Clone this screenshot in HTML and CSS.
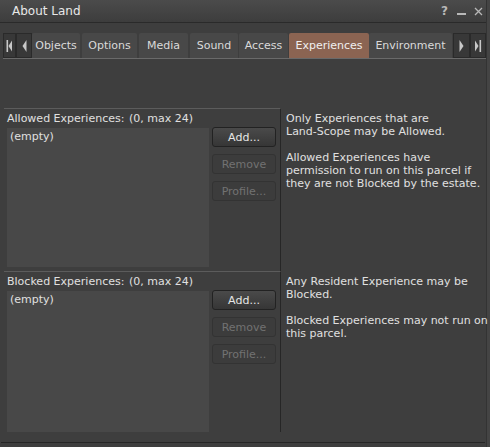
FILE: index.html
```html
<!DOCTYPE html>
<html>
<head>
<meta charset="utf-8">
<link rel="stylesheet" href="styles.css">
</head>
<body>
<div class="window">
  <div class="titlebar">
    <span class="title">About Land</span>
    <div class="controls">
      <span class="ctl">?</span>
      <span class="ctl ctl-min"></span>
      <span class="ctl ctl-x">
        <svg width="9" height="9" viewBox="0 0 9 9"><path d="M1 1L8 8M8 1L1 8" stroke="#b8b8b8" stroke-width="1.3"/></svg>
      </span>
    </div>
  </div>
  <div class="tabbar">
    <div class="navbtn nav-first">
      <svg width="10" height="14" viewBox="0 0 10 14"><rect x="1.5" y="1" width="1.6" height="12" fill="#c8c8c8"/><path d="M7 1.5L3.5 7L7 12.5Z" fill="#c8c8c8"/></svg>
    </div>
    <div class="navbtn nav-prev">
      <svg width="13" height="14" viewBox="0 0 13 14"><path d="M8.5 1L4.5 7L8.5 13Z" fill="#c8c8c8"/></svg>
    </div>
    <div class="tab t-objects">Objects</div>
    <div class="tab t-options">Options</div>
    <div class="tab t-media">Media</div>
    <div class="tab t-sound">Sound</div>
    <div class="tab t-access">Access</div>
    <div class="tab t-exp active">Experiences</div>
    <div class="tab t-env">Environment</div>
    <div class="navbtn nav-next">
      <svg width="14" height="14" viewBox="0 0 14 14"><path d="M4.5 1L8.5 7L4.5 13Z" fill="#c8c8c8"/></svg>
    </div>
    <div class="navbtn nav-last">
      <svg width="14" height="14" viewBox="0 0 14 14"><path d="M4 1.5L7.5 7L4 12.5Z" fill="#c8c8c8"/><rect x="8.5" y="1" width="1.6" height="12" fill="#c8c8c8"/></svg>
    </div>
  </div>

  <div class="content">
    <div class="row row-allowed">
      <div class="left">
        <div class="label"><span class="lname">Allowed Experiences:</span><span>(0, max 24)</span></div>
        <div class="body">
          <div class="list list-allowed"><div class="item">(empty)</div></div>
          <div class="buttons">
            <div class="btn">Add...</div>
            <div class="btn disabled">Remove</div>
            <div class="btn disabled">Profile...</div>
          </div>
        </div>
      </div>
      <div class="info">
        <p>Only Experiences that are<br>Land-Scope may be Allowed.</p>
        <p>Allowed Experiences have<br>permission to run on this parcel if<br>they are not Blocked by the estate.</p>
      </div>
    </div>
    <div class="row row-blocked">
      <div class="left">
        <div class="label"><span class="lname">Blocked Experiences:</span><span>(0, max 24)</span></div>
        <div class="body">
          <div class="list list-blocked"><div class="item">(empty)</div></div>
          <div class="buttons">
            <div class="btn">Add...</div>
            <div class="btn disabled">Remove</div>
            <div class="btn disabled">Profile...</div>
          </div>
        </div>
      </div>
      <div class="info">
        <p>Any Resident Experience may be<br>Blocked.</p>
        <p>Blocked Experiences may not run on<br>this parcel.</p>
      </div>
    </div>
  </div>
  <div class="bottomline"></div>
</div>
</body>
</html>
```

FILE: styles.css
```css
* { box-sizing: border-box; }
html, body { margin: 0; padding: 0; }
body {
  background: #444444;
  font-family: "DejaVu Sans", sans-serif;
  color: #e0e0e0;
  width: 490px;
  height: 447px;
  overflow: hidden;
}
.window {
  width: 487px;
  height: 447px;
  background: #3e3e3e;
  border-right: 1px solid #333333;
}
.titlebar {
  height: 23px;
  display: flex;
  align-items: center;
  padding-left: 12px;
  padding-right: 3px;
  background: linear-gradient(#4b4b4b, #3d3d3d);
  border-bottom: 1px solid #2a2a2a;
}
.title {
  font-size: 12px;
  color: #e8e8e8;
  flex: 1;
  margin-top: -1px;
}
.controls {
  display: flex;
  align-items: center;
  gap: 8px;
}
.ctl {
  color: #b8b8b8;
  font-size: 12px;
  font-weight: bold;
  width: 9px;
  display: flex;
  justify-content: center;
}
.ctl-min {
  height: 2px;
  background: #b8b8b8;
  margin-top: 6px;
}
.ctl-x { height: 9px; }
.tabbar {
  margin-top: 10px;
  margin-left: 3px;
  width: 483px;
  height: 26px;
  display: flex;
  border-bottom: 1px solid #6a6a6a;
}
.navbtn {
  flex: none;
  height: 25px;
  background: #383838;
  border: 1px solid #2a2a2a;
  display: flex;
  align-items: center;
  justify-content: center;
}
.nav-first { width: 13px; }
.nav-prev { width: 16px; }
.nav-next { width: 17px; margin-left: 1px; }
.nav-last { width: 16px; }
.tab {
  flex: none;
  height: 25px;
  background: #484848;
  font-size: 11px;
  color: #dadada;
  display: flex;
  align-items: center;
  justify-content: center;
  border-radius: 2px 2px 0 0;
}
.t-objects { width: 48px; margin-right: 2px; }
.t-options { width: 55px; margin-right: 2px; }
.t-media { width: 49px; margin-right: 2px; }
.t-sound { width: 48px; margin-right: 1px; }
.t-access { width: 49px; margin-right: 1px; }
.t-exp { width: 80px; }
.t-env { width: 83px; }
.tab.active {
  background: #8b6452;
  color: #f0f0f0;
}
.content {
  margin-top: 49px;
  margin-left: 4px;
}
.row {
  display: flex;
}
.row-allowed { height: 163px; }
.row-blocked { height: 161px; }
.left {
  flex: none;
  width: 277px;
  border-top: 1px solid #5c5c5c;
  border-right: 1px solid #262626;
  padding-left: 3px;
}
.label {
  height: 19px;
  font-size: 11px;
  display: flex;
  align-items: center;
  color: #e0e0e0;
}
.lname { flex: none; width: 122px; }
.body {
  display: flex;
  align-items: flex-start;
}
.list {
  width: 202px;
  background: #484848;
  font-size: 11px;
  padding: 2px 3px;
}
.list-allowed { height: 139px; }
.list-blocked { height: 141px; }
.item { color: #e0e0e0; }
.buttons {
  margin-left: 3px;
  margin-top: -1px;
  display: flex;
  flex-direction: column;
  gap: 7px;
}
.btn {
  width: 64px;
  height: 20px;
  border: 1px solid #222222;
  border-radius: 3px;
  background: linear-gradient(#4a4a4a, #363636);
  font-size: 11px;
  color: #e6e6e6;
  display: flex;
  align-items: center;
  justify-content: center;
}
.btn.disabled {
  background: #3c3c3c;
  border-color: #333333;
  color: #727272;
}
.info {
  flex: 1;
  white-space: nowrap;
  padding-left: 5px;
  padding-top: 4px;
  font-size: 11px;
  line-height: 13px;
  color: #e0e0e0;
}
.info p { margin: 0 0 13px 0; }
.bottomline {
  margin-top: 10px;
  margin-left: 1px;
  width: 484px;
  height: 1px;
  background: #262626;
}
```
